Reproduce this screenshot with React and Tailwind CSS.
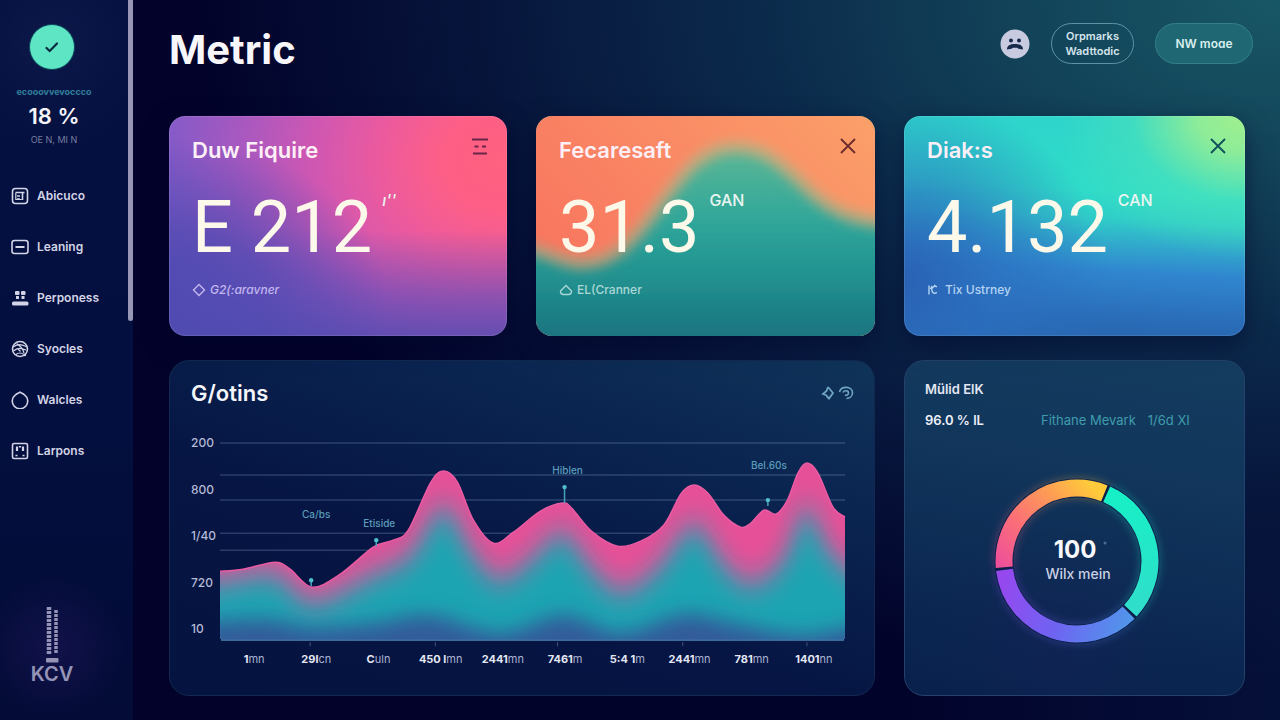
import React from "react";

/* Smooth Catmull-Rom curve through a list of [x, y] points. */
function curve(points) {
  let d = `M${points[0][0]} ${points[0][1]}`;
  for (let i = 0; i < points.length - 1; i++) {
    const a = points[i - 1] || points[i];
    const b = points[i];
    const c = points[i + 1];
    const e = points[i + 2] || c;
    const x1 = b[0] + (c[0] - a[0]) / 6;
    const y1 = b[1] + (c[1] - a[1]) / 6;
    const x2 = c[0] - (e[0] - b[0]) / 6;
    const y2 = c[1] - (e[1] - b[1]) / 6;
    d += `C${x1.toFixed(1)} ${y1.toFixed(1)} ${x2.toFixed(1)} ${y2.toFixed(1)} ${c[0]} ${c[1]}`;
  }
  return d;
}

const area = (points, bottom) =>
  `${curve(points)}V${bottom}H${points[0][0]}Z`;

const navIcons = {
  report: (
    <>
      <rect x="1.5" y="1.5" width="15" height="15" rx="3" />
      <path d="M4.5 5.5h9M6 9h3M6 12h3M11.5 6v7" />
      <path d="M4.8 6v6.5h6" strokeWidth="1.2" />
    </>
  ),
  learning: (
    <>
      <rect x="1" y="2.5" width="16" height="13" rx="2.5" />
      <path d="M4.500 9h9" strokeWidth="2" />
    </>
  ),
  people: (
    <g fill="currentColor" stroke="none">
      <rect x="4" y="2" width="4.500" height="4" rx="1" />
      <rect x="10" y="2" width="4.500" height="4" rx="1" />
      <path d="M5 7h3v3H5zM10.500 7h3v3h-3z" />
      <rect x="1" y="12.500" width="16.500" height="4" rx="1.500" />
    </g>
  ),
  globe: (
    <>
      <circle cx="9" cy="9" r="7.500" />
      <path d="M3 6.500c4-3 8-2 12 0M2.500 11c4-3.500 7-3 12.500-1M6 3.500c2 3 6 3 7 10M5 14.500c2-2 6-2 7.500 0M6.500 8.500l3 3" strokeWidth="1.200" />
      <circle cx="14" cy="15" r="1.200" fill="currentColor" stroke="none" />
    </>
  ),
  drop: <path d="M9 1.200C10.500 2.200 12 2.600 13.500 3.800A7.700 7.700 0 1 1 4.500 3.800C6 2.600 7.500 2.200 9 1.200Z" />,
  board: (
    <>
      <rect x="1.500" y="1.500" width="15" height="15" rx="1.500" />
      <path d="M6 4.500v4.500M9 4v1.500M12 4.500v4.500" strokeWidth="2.200" />
      <path d="M4.500 13.500h2M11.500 13.500h2" />
    </>
  ),
};

const nav = [
  ["Abicuco", "report"],
  ["Leaning", "learning"],
  ["Perponess", "people"],
  ["Syocles", "globe"],
  ["Walcles", "drop"],
  ["Larpons", "board"],
];

function Sidebar() {
  return (
    <aside className="flex w-[133px] shrink-0 bg-[radial-gradient(circle_at_40%_90%,#12124a_0%,transparent_11%),radial-gradient(circle_at_40%_6%,#0c1849_0%,transparent_16%),linear-gradient(180deg,#04103f_0%,#030f3e_60%,#030b36_100%)]">
      <div className="flex min-w-0 flex-1 flex-col pb-9">
        <div className="flex w-[104px] flex-col items-center pt-6">
          <span className="flex size-[46px] items-center justify-center rounded-full border border-[#0b4a5c] bg-[#5ee6c4]">
            <svg viewBox="0 0 16 16" className="size-4" fill="none" stroke="#0a2c40" strokeWidth="2.2" strokeLinecap="round" strokeLinejoin="round" aria-hidden="true">
              <path d="M2.500 9l3.200 3L13 4.500" />
            </svg>
          </span>
          <p className="mt-4 pl-1 text-[9px] leading-3 font-bold text-[#2f7f9c]">ecooovvevoccco</p>
          <p className="mt-1 pl-1 text-[22px] leading-7 font-semibold text-[#f6f4fb]">18 %</p>
          <p className="mt-1 pl-1 text-[9px] leading-3 text-[#777c9f]">OE N, MI N</p>
        </div>
        <nav className="mt-6">
          {nav.map(([label, icon]) => (
            <a key={label} href="#" className="flex h-[51px] items-center gap-2 pl-[11px] text-xs font-semibold text-[#d3d4e6]">
              <svg viewBox="0 0 18 18" className="size-[18px]" fill="none" stroke="currentColor" strokeWidth="1.6" aria-hidden="true">
                {navIcons[icon]}
              </svg>
              {label}
            </a>
          ))}
        </nav>
        <div className="mt-auto flex w-[104px] flex-col items-center text-[#9694b6]">
          <svg viewBox="0 0 14 58" className="h-[58px] w-[14px]" aria-hidden="true">
            <path d="M4 1v47" stroke="currentColor" strokeWidth="4.500" strokeDasharray="3 1" />
            <path d="M11 4v44" stroke="currentColor" strokeWidth="3.500" strokeDasharray="3 1" />
            <rect x="1" y="52" width="12.500" height="4.500" rx="1" fill="currentColor" />
          </svg>
          <p className="text-xl leading-5 font-semibold">KCV</p>
        </div>
      </div>
      <div className="h-[321px] w-[5px] rounded-b-full bg-[#9896b5]" />
    </aside>
  );
}

function Header() {
  return (
    <header className="flex h-[116px] items-start justify-between">
      <h1 className="pt-[26px] text-[40px] leading-12 font-bold text-[#f7f6fb]">Metric</h1>
      <div className="-mr-2 flex items-center pt-[23px]">
        <button type="button" aria-label="Profile" className="rounded-full">
          <svg viewBox="0 0 30 30" className="size-[30px]" aria-hidden="true">
            <circle cx="15" cy="15" r="14.500" fill="#c8cae0" />
            <circle cx="11" cy="11.500" r="2" fill="#172a4a" />
            <circle cx="19" cy="11.500" r="2" fill="#172a4a" />
            <path d="M7 20.500c0-4 3-5.500 8-5.500s8 1.500 8 5.500l-4.500-.8-1.500-1h-4l-1.500 1z" fill="#172a4a" />
          </svg>
        </button>
        <button type="button" className="ml-[21px] h-[41px] w-[83px] rounded-full border border-[#5c93a5] text-[11px] leading-[15px] font-semibold text-[#d5e4ec]">
          Orpmarks
          <br />
          Wadttodic
        </button>
        <button type="button" className="ml-[21px] h-[41px] w-[98px] rounded-full border border-[#34808a] bg-[#1f6873] text-xs font-semibold text-[#d8eeee]">
          NW moɑe
        </button>
      </div>
    </header>
  );
}

const wave = [
  [-40, 122], [0, 134], [42, 147], [76, 139], [106, 112], [132, 78], [156, 50],
  [179, 35], [202, 31], [229, 38], [256, 58], [282, 82], [309, 98], [345, 106], [390, 104],
];

function WaveBackdrop() {
  return (
    <svg viewBox="0 0 339 220" preserveAspectRatio="none" className="absolute inset-0 -z-10 size-full" aria-hidden="true">
      <defs>
        <linearGradient id="warm" x1="0" y1="0.600" x2="1" y2="0">
          <stop offset="0" stopColor="#f8755f" />
          <stop offset="0.500" stopColor="#fa8a65" />
          <stop offset="1" stopColor="#fba069" />
        </linearGradient>
        <linearGradient id="sea" x1="0" y1="30" x2="0" y2="220" gradientUnits="userSpaceOnUse">
          <stop offset="0" stopColor="#5cb795" />
          <stop offset="0.400" stopColor="#2fa69a" />
          <stop offset="0.700" stopColor="#21908f" />
          <stop offset="1" stopColor="#1a7480" />
        </linearGradient>
        <filter id="soft" x="-20%" y="-20%" width="140%" height="140%">
          <feGaussianBlur stdDeviation="7" />
        </filter>
      </defs>
      <rect width="339" height="220" fill="url(#warm)" />
      <path d={area(wave, 280)} fill="url(#sea)" filter="url(#soft)" />
      <path d={curve(wave)} fill="none" stroke="#dcb77c" strokeOpacity="0.650" strokeWidth="9" filter="url(#soft)" />
    </svg>
  );
}

const CloseIcon = <path d="M1 1l14 14M15 1L1 15" />;

const cards = [
  {
    title: "Duw Fiquire",
    value: "E 212",
    unit: "ı''",
    unitItalic: true,
    note: "G2(:aravner",
    noteItalic: true,
    noteColor: "text-[#c3b6ee]",
    iconColor: "text-[#6b2548]",
    bg: "bg-[linear-gradient(0deg,#4f4bb0d0_0%,#544cb490_18%,transparent_48%),radial-gradient(ellipse_65%_75%_at_0%_85%,#4c49ae_0%,#4f4ab0c0_45%,transparent_100%),radial-gradient(ellipse_85%_115%_at_98%_20%,#ff6180_0%,#fd5f86_20%,#ec5a9e_42%,#cf57b2_65%,#b058bd_85%,#865ac8_115%)]",
    label: "Options",
    icon: <path d="M0 1.500h16M1 15.500h14M2.500 8.500h4M10 8.500h4" />,
    mark: <path d="M7 1.500L12.500 7 7 12.500 1.500 7z" />,
  },
  {
    title: "Fecaresaft",
    value: "31.3",
    unit: "GAN",
    note: "EL(Cranner",
    noteColor: "text-[#a9d8d6]",
    iconColor: "text-[#6b2b2b]",
    bg: "bg-[#21908f]",
    backdrop: <WaveBackdrop />,
    label: "Close",
    icon: CloseIcon,
    mark: <path d="M1.500 8L7 2.500 12.500 8c0 3-1.500 3.500-3 3.500h-5C3 11.500 1.500 11 1.500 8z" />,
  },
  {
    title: "Diak:s",
    value: "4.132",
    unit: "CAN",
    note: "Tix Ustrney",
    noteColor: "text-[#b4d3f1]",
    iconColor: "text-[#10505a]",
    bg: "bg-[radial-gradient(ellipse_55%_65%_at_100%_0%,#a0f08c_0%,#8eec98_25%,#50e4b880_60%,transparent_100%),radial-gradient(ellipse_60%_85%_at_0%_75%,#2a62b4_0%,#2b6fc0b0_45%,transparent_100%),linear-gradient(183deg,#2dd3cc_0%,#2fdcc8_34%,#30cec8_46%,#31a8cc_57%,#3086cf_68%,#2a6cb8_88%,#2864ac_100%)]",
    label: "Close",
    icon: CloseIcon,
    mark: <path d="M2 2.500v9M5 3L3.500 6M9.500 3.500C6 3 4 5 5 8s4 3 4.500 1M7 2l3 2" />,
  },
];

function MetricCard({ card }) {
  return (
    <section className={`relative isolate h-[220px] overflow-hidden rounded-2xl px-[23px] pt-5 inset-ring inset-ring-white/10 shadow-[0_8px_24px_#02042a80] ${card.bg}`}>
      {card.backdrop}
      <div className="flex items-start justify-between">
        <h2 className="text-[22px] leading-7 font-semibold text-[#fdeff6]">{card.title}</h2>
        <button type="button" aria-label={card.label} className={`-mr-1 pt-[2px] ${card.iconColor}`}>
          <svg viewBox="0 0 16 16" className="size-4 overflow-visible" fill="none" stroke="currentColor" strokeWidth="1.8" aria-hidden="true">
            {card.icon}
          </svg>
        </button>
      </div>
      <p className="mt-6 flex items-start gap-2.5 text-[#fdf9ea]">
        <span className="font-[Roboto] text-[72px] leading-20">{card.value}</span>
        <span className={`text-base leading-6 font-medium text-[#e9f5f0] ${card.unitItalic ? "italic" : ""}`}>{card.unit}</span>
      </p>
      <p className={`mt-3 flex items-center gap-1 text-xs leading-5 font-medium ${card.noteColor}`}>
        <svg viewBox="0 0 14 14" className="size-[14px]" fill="none" stroke="currentColor" strokeWidth="1.4" aria-hidden="true">
          {card.mark}
        </svg>
        <span className={card.noteItalic ? "italic" : ""}>{card.note}</span>
      </p>
    </section>
  );
}

const series = [
  [0, 136], [23, 134], [55, 127], [70, 134], [92, 152], [120, 139], [153, 112],
  [173, 105], [188, 95], [210, 48], [223, 36], [237, 47], [253, 85], [273, 108],
  [293, 97], [320, 76], [342, 68], [351, 73], [372, 97], [397, 111], [420, 106],
  [443, 90], [460, 59], [473, 50], [487, 58], [503, 80], [520, 92], [530, 88],
  [543, 75], [555, 79], [566, 66], [577, 38], [586, 28], [597, 38], [612, 72], [624, 82],
];

const tealBand = [
  [-30, 147], [0, 146], [55, 139], [92, 167], [153, 139], [190, 120], [223, 72],
  [250, 115], [278, 144], [310, 125], [342, 98], [370, 132], [400, 156], [435, 135],
  [473, 90], [500, 125], [525, 148], [548, 140], [566, 118], [586, 72], [610, 118], [660, 160],
];

const blueBand = [
  [-30, 188], [45, 184], [90, 192], [153, 188], [210, 180], [280, 198], [343, 180],
  [400, 198], [465, 179], [520, 190], [586, 200], [660, 184],
];

const notes = [
  { x: 96, y: 83, text: "Ca/bs", pin: [91, 145, 151] },
  { x: 159, y: 92, text: "Etiside", pin: [156, 105, 111] },
  { x: 347, y: 39, text: "Hiblen", pin: [344, 52, 68] },
  { x: 548, y: 34, text: "Bel.60s", pin: [547, 65, 71] },
];

const ticks = [
  ["1", "mn"], ["29l", "cn"], ["C", "uln"], ["450 l", "mn"], ["2441", "mn"],
  ["7461", "m"], ["5:4 1", "m"], ["2441", "mn"], ["781", "mn"], ["1401", "nn"],
];

function AreaChart() {
  return (
    <svg viewBox="0 0 624 210" className="h-auto w-full overflow-visible" role="img" aria-label="G/otins">
      <defs>
        <clipPath id="plot">
          <path d={`${curve(series)}V201Q624 205 620 205H4Q0 205 0 201Z`} />
        </clipPath>
        <filter id="haze" x="-10%" y="-30%" width="120%" height="160%">
          <feGaussianBlur stdDeviation="11 15" />
        </filter>
        <filter id="mist" x="-10%" y="-60%" width="120%" height="220%">
          <feGaussianBlur stdDeviation="10" />
        </filter>
      </defs>
      <g stroke="#7f9cc4" strokeOpacity="0.300" strokeWidth="1.500">
        <path d="M0 8H624M0 40H624M0 65H624M0 98H624M0 115H200" />
      </g>
      <g clipPath="url(#plot)">
        <rect width="624" height="210" fill="#e65098" />
        <path d={area(tealBand, 280)} fill="#1fa4b2" filter="url(#haze)" />
        <path d={area(blueBand, 280)} fill="#305c9a" filter="url(#mist)" />
      </g>
      <path d={curve(series)} fill="none" stroke="#e95ba2" strokeWidth="1.500" />
      <path d="M1 205H623" stroke="#4b82b5" strokeWidth="1" />
      <path d="M90 207v4M215 207v4M337 207v4M462 207v4M586 207v4" stroke="#3c5684" />
      {notes.map((n) => (
        <g key={n.text} fill="#5a9cba">
          <text x={n.x} y={n.y} fontSize="10" fontWeight="500" textAnchor="middle">{n.text}</text>
          <path d={`M${n.pin[0]} ${n.pin[1]}V${n.pin[2]}`} stroke="#4a9fba" strokeWidth="1.500" />
          <circle cx={n.pin[0]} cy={n.pin[1]} r="2.200" fill="#4fc0cc" />
        </g>
      ))}
    </svg>
  );
}

function ChartPanel() {
  return (
    <section className="col-span-2 rounded-[20px] border border-[#12294f] bg-[linear-gradient(200deg,#10345a_0%,#0a2450_28%,#061543_60%,#051340_100%)] px-[21px] pt-4 pb-7">
      <div className="flex h-8 items-center justify-between">
        <h2 className="text-[22px] font-semibold text-[#f5f6fb]">G/otins</h2>
        <div className="flex items-center gap-1 text-[#6fa5c0]">
          <button type="button" aria-label="Filter">
            <svg viewBox="0 0 14 14" className="size-[14px]" fill="none" stroke="currentColor" strokeWidth="1.8" aria-hidden="true">
              <path d="M7 1L12 7 8 12.500 5.500 10M7 1L5.500 5 2 8l4 1.500" />
            </svg>
          </button>
          <button type="button" aria-label="Refresh">
            <svg viewBox="0 0 14 14" className="size-[14px] overflow-visible" fill="none" stroke="currentColor" strokeWidth="1.6" aria-hidden="true">
              <path d="M0.500 6C2-0.500 13.500 0 13.500 6.500c0 4-3 6-6 6M4 6.500c1-2.500 5.500-2.500 5.500.5 0 2-2 2.500-3.500 2" />
            </svg>
          </button>
        </div>
      </div>
      <div className="mt-[26px] flex pr-2">
        <div className="flex w-[29px] shrink-0 flex-col justify-between pb-2 text-xs leading-4 font-medium text-[#b4bad6]">
          <span>200</span>
          <span>800</span>
          <span>1/40</span>
          <span>720</span>
          <span>10</span>
        </div>
        <div className="min-w-0 flex-1">
          <AreaChart />
        </div>
      </div>
      <div className="mt-1.5 grid grid-cols-10 pr-2 pl-8 text-center text-[11px] leading-4 text-[#a9b2d0]">
        {ticks.map(([n, u], i) => (
          <span key={i} className="whitespace-nowrap">
            <b className="font-bold text-[#e4e7f3]">{n}</b>
            {u}
          </span>
        ))}
      </div>
    </section>
  );
}

function point(angle, r) {
  const t = (angle * Math.PI) / 180;
  return `${(90 + r * Math.sin(t)).toFixed(2)} ${(90 - r * Math.cos(t)).toFixed(2)}`;
}

const arc = (from, to) => `M${point(from, 73)}A73 73 0 0 1 ${point(to, 73)}`;

const arcs = [
  { d: arc(24, 133), stroke: "url(#mint)" },
  { d: arc(135, 263), stroke: "url(#violet)" },
  { d: arc(265, 382), stroke: "url(#sunset)" },
];

function Donut() {
  return (
    <svg viewBox="0 0 180 180" className="size-[180px] overflow-visible" role="img" aria-label="100 Wilx mein">
      <defs>
        <linearGradient id="mint" x1="0" y1="20" x2="0" y2="150" gradientUnits="userSpaceOnUse">
          <stop offset="0" stopColor="#16f0c6" />
          <stop offset="1" stopColor="#33dccb" />
        </linearGradient>
        <linearGradient id="violet" x1="15" y1="100" x2="145" y2="150" gradientUnits="userSpaceOnUse">
          <stop offset="0" stopColor="#9747ee" />
          <stop offset="0.500" stopColor="#6f63f2" />
          <stop offset="1" stopColor="#5097ea" />
        </linearGradient>
        <linearGradient id="sunset" x1="15" y1="98" x2="105" y2="15" gradientUnits="userSpaceOnUse">
          <stop offset="0" stopColor="#ee4f9b" />
          <stop offset="0.350" stopColor="#fb6f78" />
          <stop offset="0.700" stopColor="#fd9c55" />
          <stop offset="1" stopColor="#ffcb3a" />
        </linearGradient>
        <filter id="glow" x="-20%" y="-20%" width="140%" height="140%">
          <feGaussianBlur stdDeviation="4" />
        </filter>
      </defs>
      <g fill="none" strokeWidth="20" opacity="0.300" filter="url(#glow)">
        {arcs.map((a) => <path key={a.d} d={a.d} stroke={a.stroke} />)}
      </g>
      <circle cx="90" cy="90" r="73" fill="none" stroke="#0b1f4b" strokeWidth="19" />
      <g fill="none" strokeWidth="17">
        {arcs.map((a) => <path key={a.d} d={a.d} stroke={a.stroke} />)}
      </g>
      <text x="88" y="87" textAnchor="middle" fontSize="24" fontWeight="700" fill="#f8f8fc">100</text>
      <circle cx="118" cy="72" r="1.500" fill="#496c93" />
      <text x="91" y="108" textAnchor="middle" fontSize="14" fontWeight="500" fill="#c9cfe3">Wilx mein</text>
    </svg>
  );
}

function SharePanel() {
  return (
    <section className="rounded-[20px] border border-[#24426b] bg-[radial-gradient(circle_at_45%_85%,#1b1f5a50_0%,transparent_35%),linear-gradient(190deg,#143d5f_0%,#11355b_35%,#0c2953_70%,#08214c_100%)] px-5 pt-[18px]">
      <h2 className="text-[13px] leading-5 font-semibold text-[#e3e6f2]">Mülid ElK</h2>
      <div className="mt-[11px] flex items-center leading-5">
        <p className="w-[116px] text-[13px] font-semibold text-[#eceff8]">96.0 % lL</p>
        <p className="flex gap-3 text-[13px] text-[#3f9cac]">
          <span>Fithane Mevark</span>
          <span>1/6d XI</span>
        </p>
      </div>
      <div className="mt-[41px] flex justify-center pl-1">
        <Donut />
      </div>
    </section>
  );
}

export default function App() {
  return (
    <div className="flex min-h-screen bg-[radial-gradient(ellipse_85%_95%_at_100%_0%,#185765_0%,#124258_25%,#0b2a4b_48%,#07163c_72%,transparent_100%),linear-gradient(90deg,#02022a_0%,#02032b_70%,#051039_100%)] font-[Inter,'Liberation_Sans',sans-serif]">
      <Sidebar />
      <main className="min-w-0 flex-1 pr-[35px] pb-6 pl-9">
        <Header />
        <div className="grid grid-cols-[338fr_339fr_341fr] gap-x-[29px] gap-y-6">
          {cards.map((card) => (
            <MetricCard key={card.title} card={card} />
          ))}
          <ChartPanel />
          <SharePanel />
        </div>
      </main>
    </div>
  );
}
